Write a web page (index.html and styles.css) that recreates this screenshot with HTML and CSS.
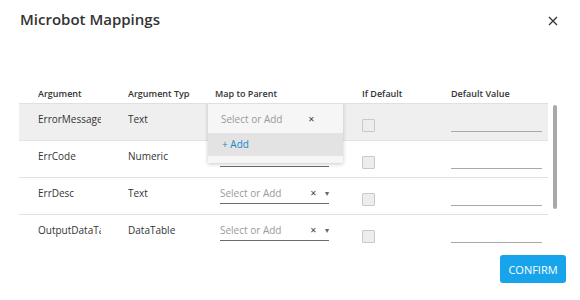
FILE: index.html
```html
<!DOCTYPE html>
<html>
<head>
    <title>Microbot Mappings</title>
    <meta name="viewport" content="width=device-width, initial-scale=1.0">
    <link rel="stylesheet" href="styles.css">
</head>
<body>
    <div class="modal">
        <div class="modal-head">
            <h1 class="title">Microbot Mappings</h1>
            <button class="close-btn" aria-label="Close">
                <svg width="10" height="10" viewBox="0 0 10 10">
                    <path d="M1 1 L9 9 M9 1 L1 9" stroke="#333" stroke-width="1.3" fill="none"/>
                </svg>
            </button>
        </div>

        <div class="grid-head">
            <div class="cell col-arg"><span class="clip clip-type">Argument</span></div>
            <div class="cell col-type"><span class="clip clip-type">Argument Type</span></div>
            <div class="cell col-map">Map to Parent</div>
            <div class="cell col-def">If Default</div>
            <div class="cell col-val">Default Value</div>
        </div>

        <div class="grid-body">
            <div class="rows">
                <div class="row active">
                    <div class="cell col-arg"><span class="clip">ErrorMessage</span></div>
                    <div class="cell col-type">Text</div>
                    <div class="cell col-map">
                        <div class="menu">
                            <div class="menu-input">
                                <span>Select or Add</span>
                                <span class="x">&#x2715;</span>
                            </div>
                            <div class="menu-option">+ Add</div>
                        </div>
                    </div>
                    <div class="cell col-def"><span class="check"></span></div>
                    <div class="cell col-val"><div class="line"></div></div>
                </div>
                <div class="row">
                    <div class="cell col-arg"><span class="clip">ErrCode</span></div>
                    <div class="cell col-type">Numeric</div>
                    <div class="cell col-map">
                        <div class="select">
                            <span>Select or Add</span>
                            <span class="x">&#x2715;</span>
                            <span class="caret">&#x25BE;</span>
                        </div>
                    </div>
                    <div class="cell col-def"><span class="check"></span></div>
                    <div class="cell col-val"><div class="line"></div></div>
                </div>
                <div class="row">
                    <div class="cell col-arg"><span class="clip">ErrDesc</span></div>
                    <div class="cell col-type">Text</div>
                    <div class="cell col-map">
                        <div class="select">
                            <span>Select or Add</span>
                            <span class="x">&#x2715;</span>
                            <span class="caret">&#x25BE;</span>
                        </div>
                    </div>
                    <div class="cell col-def"><span class="check"></span></div>
                    <div class="cell col-val"><div class="line"></div></div>
                </div>
                <div class="row">
                    <div class="cell col-arg"><span class="clip">OutputDataTable</span></div>
                    <div class="cell col-type">DataTable</div>
                    <div class="cell col-map">
                        <div class="select">
                            <span>Select or Add</span>
                            <span class="x">&#x2715;</span>
                            <span class="caret">&#x25BE;</span>
                        </div>
                    </div>
                    <div class="cell col-def"><span class="check"></span></div>
                    <div class="cell col-val"><div class="line"></div></div>
                </div>
            </div>
            <div class="scroll-track"><div class="scroll-thumb"></div></div>
        </div>

        <div class="modal-foot">
            <button class="confirm-btn">CONFIRM</button>
        </div>
    </div>
</body>
</html>
```

FILE: styles.css
```css
body {
    margin: 0;
    background-color: #ffffff;
    font-family: 'Open Sans', 'Noto Sans', sans-serif;
    color: #333333;
}

.modal {
    width: 580px;
    height: 300px;
    box-sizing: border-box;
    padding: 0 14px 0 19px;
    overflow: hidden;
}

.modal-head {
    display: flex;
    justify-content: space-between;
    align-items: flex-start;
    height: 38px;
}

.title {
    margin: 0;
    padding-top: 7px;
    padding-left: 1px;
    font-size: 15px;
    line-height: 24px;
    font-weight: 600;
    color: #333333;
}

.close-btn {
    margin-top: 16px;
    margin-right: 8px;
    padding: 0;
    border: none;
    background: none;
    width: 10px;
    height: 10px;
    line-height: 0;
}

.grid-head {
    display: flex;
    width: 529px;
    margin-top: 46px;
    height: 19px;
    border-bottom: 1px solid #e0e0e0;
    font-size: 9px;
    font-weight: 600;
    line-height: 19px;
    color: #333333;
}

.cell {
    box-sizing: border-box;
    padding-left: 19px;
    white-space: nowrap;
    overflow: hidden;
}

.col-arg { width: 89px; }
.col-type { width: 88px; padding-left: 20px; }
.col-map { width: 147px; overflow: visible; position: relative; }
.col-def { width: 89px; }
.col-val { width: 116px; }

.clip {
    display: inline-block;
    max-width: 63px;
    overflow: hidden;
    vertical-align: top;
}

.clip-type {
    max-width: 62px;
}

.grid-body {
    display: flex;
    height: 146px;
    overflow: hidden;
}

.rows {
    width: 529px;
}

.row {
    display: flex;
    height: 36px;
    border-bottom: 1px solid #e2e2e2;
    font-size: 10px;
    line-height: 14px;
    color: #333333;
}

.row .cell {
    padding-top: 8px;
}

.row.active {
    background-color: #efefef;
}

.select {
    display: flex;
    align-items: center;
    width: 109px;
    margin-left: 5px;
    padding-bottom: 3px;
    border-bottom: 1px solid #6b6b6b;
    color: #9a9a9a;
}

.select span:first-child {
    flex: 1;
}

.x {
    font-size: 8px;
    color: #444444;
}

.caret {
    font-size: 8px;
    color: #666666;
    margin-left: 8px;
}

.menu {
    position: absolute;
    left: 12px;
    top: -4px;
    width: 135px;
    height: 63px;
    background-color: #f6f6f6;
    box-shadow: 0 1px 4px rgba(0, 0, 0, 0.22);
    z-index: 2;
}

.menu-input {
    display: flex;
    justify-content: space-between;
    height: 33px;
    box-sizing: border-box;
    padding: 12px 28px 0 13px;
    color: #9a9a9a;
}

.menu-option {
    height: 23px;
    padding-left: 14px;
    line-height: 23px;
    background-color: #e3e3e3;
    color: #1a86c9;
}

.check {
    display: block;
    width: 11px;
    height: 11px;
    margin-top: 7px;
    border: 1px solid #c9c9c9;
    border-radius: 1px;
    background-color: #ededed;
}

.line {
    width: 91px;
    margin-top: 19px;
    border-bottom: 1px solid #a9a9a9;
}

.scroll-track {
    margin-left: 5px;
    width: 4px;
}

.scroll-thumb {
    margin-top: 1px;
    height: 104px;
    border-radius: 2px;
    background-color: #a9a9a9;
}

.modal-foot {
    display: flex;
    justify-content: flex-end;
    padding-top: 5px;
}

.confirm-btn {
    padding: 0;
    width: 66px;
    height: 28px;
    border: none;
    border-radius: 3px;
    background-color: #18a4ea;
    color: #ffffff;
    font-family: 'Open Sans', 'Noto Sans', sans-serif;
    font-size: 11px;
}
```
